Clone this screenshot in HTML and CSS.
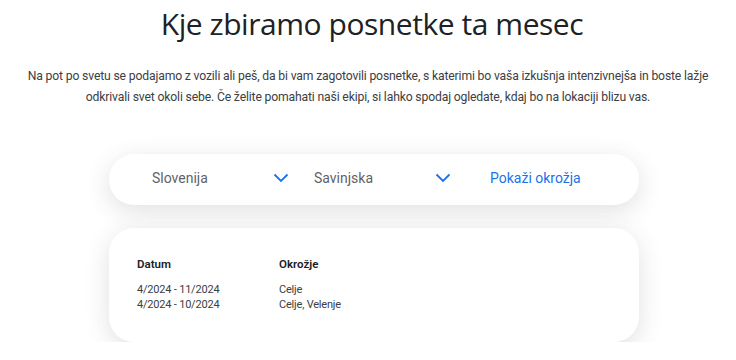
FILE: index.html
```html
<!DOCTYPE html>
<html lang="sl">
<head>
  <meta charset="UTF-8" />
  <meta name="viewport" content="width=device-width, initial-scale=1.0" />
  <title>Kje zbiramo posnetke</title>
  <link rel="stylesheet" href="styles.css">
</head>
<body>
  <div class="page">
    <h1>Kje zbiramo posnetke ta mesec</h1>
    <p class="intro">Na pot po svetu se podajamo z vozili ali peš, da bi vam zagotovili posnetke, s katerimi bo vaša izkušnja intenzivnejša in boste lažje odkrivali svet okoli sebe. Če želite pomahati naši ekipi, si lahko spodaj ogledate, kdaj bo na lokaciji blizu vas.</p>

    <div class="card filter-bar">
      <div class="select">
        <span>Slovenija</span>
        <svg class="chevron" viewBox="0 0 16 10" width="16" height="10"><path d="M1.5 1.5 L8 8 L14.5 1.5" /></svg>
      </div>
      <div class="select">
        <span>Savinjska</span>
        <svg class="chevron" viewBox="0 0 16 10" width="16" height="10"><path d="M1.5 1.5 L8 8 L14.5 1.5" /></svg>
      </div>
      <a href="#" class="show-link">Pokaži okrožja</a>
    </div>

    <div class="card results">
      <table>
        <thead>
          <tr><th>Datum</th><th>Okrožje</th></tr>
        </thead>
        <tbody>
          <tr><td>4/2024 - 11/2024</td><td>Celje</td></tr>
          <tr><td>4/2024 - 10/2024</td><td>Celje, Velenje</td></tr>
        </tbody>
      </table>
    </div>
  </div>
</body>
</html>
```

FILE: styles.css
```css
body {
  margin: 0;
  padding: 0;
  background-color: #fff;
  font-family: Roboto, 'Liberation Sans', sans-serif;
  color: #202124;
}

.page {
  width: 736px;
  overflow: hidden;
}

h1 {
  margin: 3px 0 0;
  padding-left: 8px;
  font-family: 'Open Sans', Roboto, sans-serif;
  font-weight: 400;
  font-size: 30px;
  line-height: 42px;
  text-align: center;
  color: #202124;
  letter-spacing: -0.45px;
}

.intro {
  margin: 21px auto 0;
  width: 690px;
  font-size: 12.2px;
  line-height: 21px;
  letter-spacing: -0.16px;
  text-align: center;
  color: #3c4043;
}

.card {
  background-color: white;
  border-radius: 25px;
  box-shadow: 0 6px 24px rgba(60, 64, 67, 0.16);
  width: 530px;
  margin-left: 109px;
  box-sizing: border-box;
}

.filter-bar {
  margin-top: 46px;
  height: 51px;
  display: flex;
  align-items: center;
  padding: 0 0 3px 43px;
  font-size: 14px;
}

.select {
  display: flex;
  align-items: center;
  justify-content: space-between;
  width: 137px;
  margin-right: 25px;
  color: #5f6368;
}

.chevron {
  fill: none;
  stroke: #1a73e8;
  stroke-width: 1.8;
}

.show-link {
  margin-left: 14px;
  color: #1a73e8;
  text-decoration: none;
}

.results {
  margin-top: 23px;
  height: 114px;
  padding: 29px 28px 0;
}

table {
  border-collapse: collapse;
  font-size: 11px;
}

th {
  text-align: left;
  font-size: 11.5px;
  font-weight: 600;
  width: 142px;
  padding: 0 0 11px;
  line-height: 14px;
  color: #202124;
}

td {
  padding: 0;
  line-height: 15px;
  letter-spacing: -0.2px;
  color: #3c4043;
}
```
